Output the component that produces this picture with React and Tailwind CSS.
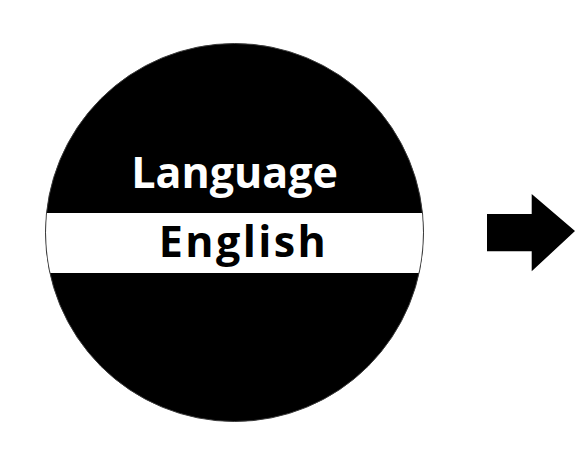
export default function App() {
  return (
    <div className="w-[575px] h-[466px] bg-white flex items-start overflow-hidden" style={{ fontFamily: '"Open Sans", "Noto Sans", sans-serif' }}>
      <div className="ml-[45px] mt-[43px] w-[379px] h-[379px] shrink-0 rounded-full bg-black border border-[#3a3a3a] overflow-hidden flex flex-col pt-[106px]">
        <div className="text-white font-bold text-[43px] leading-[43px] text-center">Language</div>
        <div className="mt-[20px] h-[60px] bg-white pt-[6px] pl-[18px] text-black font-bold text-[43px] leading-[43px] tracking-[2.4px] text-center">English</div>
      </div>
      <svg className="ml-[63px] mt-[194px] shrink-0" width="88" height="78" viewBox="0 0 88 78">
        <polygon points="0,20 44.7,20 44.7,0 88,37 44.7,77.3 44.7,57.3 0,57.3" fill="#000" />
      </svg>
    </div>
  );
}
